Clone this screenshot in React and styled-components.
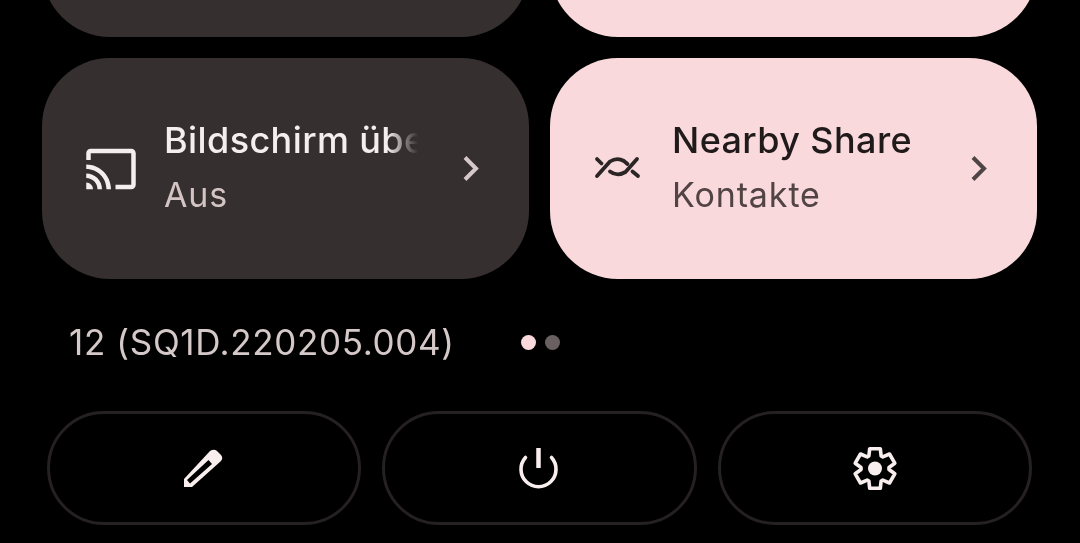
import React from 'react';
import styled, { createGlobalStyle } from 'styled-components';

const GlobalStyle = createGlobalStyle`
  html, body {
    margin: 0;
    padding: 0;
    background: #000;
  }
`;

const gearPath = () => {
  const pt = (r, deg) => {
    const a = ((deg - 90) * Math.PI) / 180;
    return `${(35 + r * Math.cos(a)).toFixed(2)} ${(32.5 + r * Math.sin(a)).toFixed(2)}`;
  };
  let d = '';
  for (let i = 0; i < 6; i++) {
    const c = i * 60;
    d += `${i === 0 ? 'M' : 'L'}${pt(14, c - 26)} L${pt(20.5, c - 15)} L${pt(20.5, c + 15)} L${pt(14, c + 26)} `;
  }
  return d + 'Z';
};

const Page = styled.div`
  width: 1080px;
  height: 543px;
  overflow: hidden;
  background: #000;
  font-family: Inter, Roboto, 'Liberation Sans', sans-serif;
  opacity: 0.999;
`;

const TileGrid = styled.div`
  display: grid;
  grid-template-columns: 487px 487px;
  grid-auto-rows: 221px;
  gap: 21px;
  margin: -184px 0 0 42px;
`;

const Tile = styled.div`
  display: flex;
  align-items: center;
  padding: 0 49px 0 42px;
  border-radius: 68px;
  background: ${(p) => (p.$active ? '#f9d9dc' : '#352f2f')};
  color: ${(p) => (p.$active ? '#201a1b' : '#f5eeee')};
`;

const TileIcon = styled.svg`
  flex: none;
  width: 54px;
  height: 54px;
  margin-right: 26px;
`;

const TileText = styled.div`
  flex: 1;
  min-width: 0;
  display: flex;
  flex-direction: column;
  gap: 1px;
  margin-top: -3px;
`;

const Title = styled.div`
  width: 254px;
  font-size: 36px;
  line-height: 54px;
  font-weight: 500;
  letter-spacing: 0.4px;
  white-space: nowrap;
  overflow: hidden;
  ${(p) => p.$fade && 'mask-image: linear-gradient(to right, #000 88%, transparent 100%);'}
`;

const Sub = styled.div`
  font-size: 34px;
  line-height: 54px;
  letter-spacing: 0.9px;
  color: ${(p) => (p.$active ? '#524345' : '#d5c4c4')};
`;

const Chevron = styled.svg`
  flex: none;
  width: 18px;
  height: 27px;
  color: ${(p) => (p.$active ? '#4f4546' : '#d5c8c8')};
`;

const Footer = styled.div`
  display: flex;
  align-items: center;
  height: 46px;
  margin: 40px 0 0 69px;
`;

const Build = styled.div`
  font-size: 35px;
  line-height: 46px;
  letter-spacing: 0.65px;
  color: #d5c8c8;
`;

const Dots = styled.div`
  display: flex;
  gap: 9px;
  margin-left: 66px;
`;

const Dot = styled.span`
  width: 15px;
  height: 15px;
  border-radius: 50%;
  background: ${(p) => (p.$on ? '#f9d9dc' : '#6a6061')};
`;

const Actions = styled.div`
  display: grid;
  grid-template-columns: repeat(3, 1fr);
  gap: 21px;
  width: 985px;
  margin: 46px 0 0 47px;
`;

const ActionButton = styled.div`
  box-sizing: border-box;
  height: 114px;
  display: flex;
  align-items: center;
  justify-content: center;
  border: 3px solid #252021;
  border-radius: 57px;
`;

const ActionIcon = styled.svg`
  width: 70px;
  height: 65px;
  color: #f8eeee;
`;

function ChevronIcon({ active }) {
  return (
    <Chevron $active={active} viewBox="0 0 18 27" fill="none">
      <path d="M3 2.5 L14 13.5 L3 24.5" stroke="currentColor" strokeWidth="4" />
    </Chevron>
  );
}

export default function App() {
  return (
    <Page>
      <GlobalStyle />
      <TileGrid>
        <Tile />
        <Tile $active />
        <Tile>
          <TileIcon viewBox="0 0 24 24" fill="currentColor">
            <path d="M21 3H3c-1.1 0-2 .9-2 2v3h2V5h18v14h-7v2h7c1.1 0 2-.9 2-2V5c0-1.1-.9-2-2-2zM1 18v3h3c0-1.66-1.34-3-3-3zm0-4v2c2.76 0 5 2.24 5 5h2c0-3.87-3.13-7-7-7zm0-4v2c4.97 0 9 4.03 9 9h2c0-6.08-4.93-11-11-11z" />
          </TileIcon>
          <TileText>
            <Title $fade>Bildschirm übertragen</Title>
            <Sub>Aus</Sub>
          </TileText>
          <ChevronIcon />
        </Tile>
        <Tile $active>
          <TileIcon viewBox="8 -2 54 54" fill="none" stroke="#2b2526" strokeWidth="3.8" strokeLinecap="round">
            <path d="M13 15 L17.5 19.5" />
            <path d="M13 32 L26 17.5 Q33 13 40 17 L43.5 20" />
            <path d="M26 27.5 Q33 33 41.5 28 L53 15" />
            <path d="M48.5 27.5 L54 32" />
          </TileIcon>
          <TileText>
            <Title>Nearby Share</Title>
            <Sub $active>Kontakte</Sub>
          </TileText>
          <ChevronIcon active />
        </Tile>
      </TileGrid>
      <Footer>
        <Build>12 (SQ1D.220205.004)</Build>
        <Dots>
          <Dot $on />
          <Dot />
        </Dots>
      </Footer>
      <Actions>
        <ActionButton>
          <ActionIcon viewBox="0 0 70 65" fill="currentColor">
            <path
              fillRule="evenodd"
              d="M41 15 Q45 12.5 48 15 L52 19 Q54.5 22 52 25 L23 51 L15 51 L15 43 Z M39.5 24 L43 28 L21 47.5 L18 44 Z"
            />
          </ActionIcon>
        </ActionButton>
        <ActionButton>
          <ActionIcon viewBox="0 0 70 65" fill="none" stroke="currentColor">
            <path d="M34.5 12 V32" strokeWidth="4.5" />
            <path d="M21.5 21.5 A17.5 17.5 0 1 0 47.5 21.5" strokeWidth="3.6" strokeLinecap="round" />
          </ActionIcon>
        </ActionButton>
        <ActionButton>
          <ActionIcon viewBox="0 0 70 65">
            <path d={gearPath()} fill="none" stroke="currentColor" strokeWidth="3.6" strokeLinejoin="round" />
            <circle cx="35" cy="32.5" r="7" fill="currentColor" />
          </ActionIcon>
        </ActionButton>
      </Actions>
    </Page>
  );
}
